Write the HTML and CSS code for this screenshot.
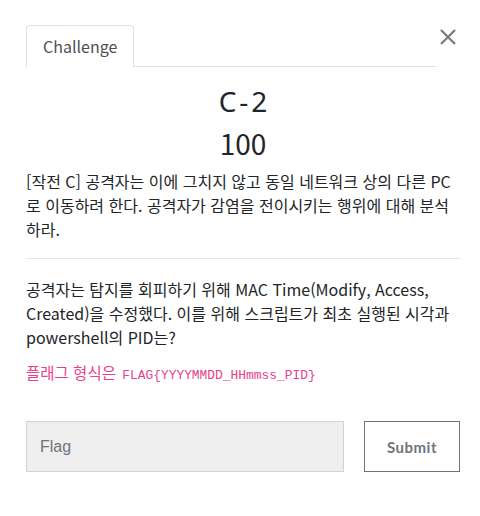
FILE: index.html
```html
<!DOCTYPE html>
<html lang="ko">
<head>
    <meta charset="UTF-8">
    <meta name="viewport" content="width=device-width, initial-scale=1.0">
    <title>Challenge</title>
    <link rel="stylesheet" href="styles.css">
</head>
<body>
    <div class="modal">
        <div class="modal-head">
            <div class="tabs">
                <span class="tab">Challenge</span>
            </div>
            <button class="close" aria-label="Close">
                <svg width="18" height="18" viewBox="0 0 18 18">
                    <path d="M2 2 L16 16 M16 2 L2 16" stroke="#7a7a7a" stroke-width="2.2" fill="none"/>
                </svg>
            </button>
        </div>
        <h2 class="title">C-2</h2>
        <h3 class="value">100</h3>
        <p class="desc">[작전 C] 공격자는 이에 그치지 않고 동일 네트워크 상의 다른 PC로 이동하려 한다. 공격자가 감염을 전이시키는 행위에 대해 분석하라.</p>
        <hr>
        <p class="desc">공격자는 탐지를 회피하기 위해 MAC Time(Modify, Access, Created)을 수정했다. 이를 위해 스크립트가 최초 실행된 시각과 powershell의 PID는?</p>
        <p class="format">플래그 형식은 <code>FLAG{YYYYMMDD_HHmmss_PID}</code></p>
        <form class="submit-row">
            <input type="text" placeholder="Flag">
            <button type="button" class="btn">Submit</button>
        </form>
    </div>
</body>
</html>
```

FILE: styles.css
```css
body {
    margin: 0;
    font-family: "Noto Sans CJK KR", "Noto Sans", sans-serif;
    color: #212529;
    background: #fff;
}
.modal {
    padding: 25px 20px 0 26px;
}
.modal-head {
    display: flex;
    align-items: flex-start;
}
.tabs {
    flex: 0 0 410px;
    display: flex;
    border-bottom: 1px solid #dee2e6;
}
.tab {
    padding: 8px 16px 9px;
    border: 1px solid #dee2e6;
    border-bottom: none;
    border-radius: 4px 4px 0 0;
    color: #495057;
    font-size: 16px;
    line-height: 24px;
    margin-bottom: -1px;
    background: #fff;
}
.close {
    margin: 2px 0 0 2px;
    padding: 0;
    border: none;
    background: none;
    width: 20px;
    height: 20px;
    display: flex;
    align-items: center;
    justify-content: center;
}
.title {
    margin: 17px 0 0;
    text-align: center;
    font-family: "Noto Sans", sans-serif;
    font-weight: normal;
    font-size: 28px;
    line-height: 34px;
    letter-spacing: 3px;
    padding-left: 3px;
}
.value {
    margin: 8px 0 0;
    text-align: center;
    font-weight: normal;
    font-size: 28px;
    line-height: 34px;
}
.desc {
    margin: 9px 0 0;
    font-size: 16px;
    line-height: 24px;
}
hr {
    margin: 17px 0 18px;
    border: none;
    border-top: 1px solid #e5e5e5;
}
hr + .desc {
    margin-top: 0;
}
.format {
    margin: 12px 0 0;
    color: #e83e8c;
    font-size: 15.5px;
    line-height: 22px;
}
code {
    font-family: "Liberation Mono", monospace;
    font-size: 12.9px;
    margin-left: 2px;
}
.submit-row {
    display: flex;
    gap: 20px;
    margin-top: 34px;
}
input {
    width: 318px;
    height: 51px;
    box-sizing: border-box;
    border: 1px solid #ced4da;
    background: #efefef;
    padding: 0 13px;
    font-family: "Liberation Sans", Arial, sans-serif;
    font-size: 16px;
    color: #495057;
}
input::placeholder {
    color: #6c757d;
}
.btn {
    width: 96px;
    height: 51px;
    border: 1px solid #6c757d;
    background: #fff;
    color: #6c757d;
    font-family: "Lato", sans-serif;
    font-weight: bold;
    font-size: 15px;
    letter-spacing: 0.5px;
}
```
